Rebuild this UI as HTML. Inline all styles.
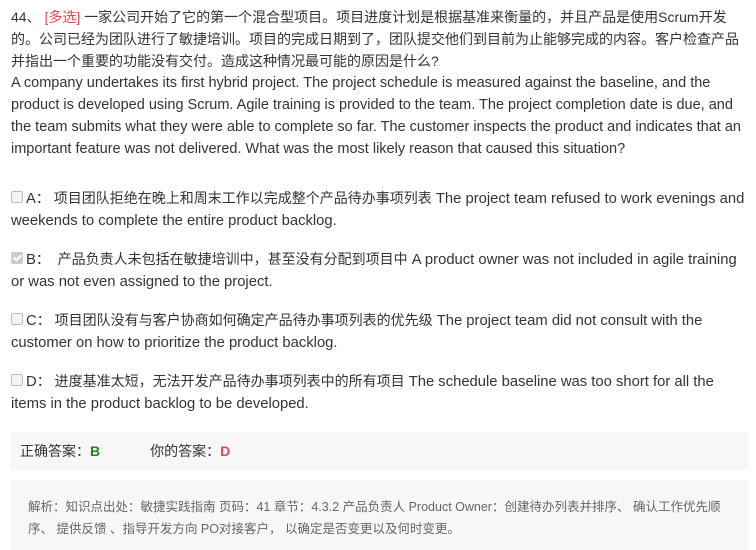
<!DOCTYPE html>
<html><head><meta charset="utf-8"><style>
body{margin:0;background:#fff;font-family:"Liberation Sans","Noto Sans CJK SC",sans-serif;color:#333;font-size:14px;}
.wrap{position:absolute;left:11px;top:6px;width:737px;}
p{margin:0;line-height:22px;}
.en{font-size:14.5px;}
.red{color:#e9474f;}
.opt{position:absolute;left:11px;width:737px;line-height:22px;font-size:14.8px}
.opt .zh{font-size:14px}
.cb{display:inline-block;width:10px;height:10px;border:1px solid #bbb;border-radius:2px;background:#f4f4f4;vertical-align:0px;margin-right:3px;position:relative}
.cb.on{background:#ccc;border-color:#ccc}
.cb.on:after{content:"";position:absolute;left:3px;top:0px;width:3px;height:6px;border:solid #fff;border-width:0 2px 2px 0;transform:rotate(45deg)}
.ans{position:absolute;left:11px;top:432px;width:737px;height:38px;background:#f7f7f7;line-height:38px;font-size:14px;color:#333}
.exp{position:absolute;left:11px;top:480px;width:737px;height:70px;background:#f7f7f7;font-size:12.5px;color:#666;}
</style></head><body>
<div class="wrap"><p>44、 <span class="red">[多选]</span> 一家公司开始了它的第一个混合型项目。项目进度计划是根据基准来衡量的，并且产品是使用Scrum开发的。公司已经为团队进行了敏捷培训。项目的完成日期到了，团队提交他们到目前为止能够完成的内容。客户检查产品并指出一个重要的功能没有交付。造成这种情况最可能的原因是什么?</p>
<p class="en">A company undertakes its first hybrid project. The project schedule is measured against the baseline, and the product is developed using Scrum. Agile training is provided to the team. The project completion date is due, and the team submits what they were able to complete so far. The customer inspects the product and indicates that an important feature was not delivered. What was the most likely reason that caused this situation?</p></div>
<div class="opt" style="top:187px"><span class="cb"></span>A<span class="zh">： 项目团队拒绝在晚上和周末工作以完成整个产品待办事项列表</span> The project team refused to work evenings and weekends to complete the entire product backlog.</div>
<div class="opt" style="top:248px"><span class="cb on"></span>B<span class="zh">： &nbsp;产品负责人未包括在敏捷培训中，甚至没有分配到项目中</span> A product owner was not included in agile training or was not even assigned to the project.</div>
<div class="opt" style="top:309px"><span class="cb"></span>C<span class="zh">： 项目团队没有与客户协商如何确定产品待办事项列表的优先级</span> The project team did not consult with the customer on how to prioritize the product backlog.</div>
<div class="opt" style="top:370px"><span class="cb"></span>D<span class="zh">： 进度基准太短，无法开发产品待办事项列表中的所有项目</span> The schedule baseline was too short for all the items in the product backlog to be developed.</div>
<div class="ans"><span style="margin-left:9px">正确答案：<b style="color:#1a8a1a">B</b></span><span style="margin-left:50px">你的答案：<b style="color:#e9474f">D</b></span></div>
<div class="exp"><div style="padding:16px 16px 0 17px;line-height:22px">解析：知识点出处：敏捷实践指南 页码：41 章节：4.3.2 产品负责人 Product Owner：创建待办列表并排序、 确认工作优先顺序、 提供反馈 、指导开发方向 PO对接客户， 以确定是否变更以及何时变更。</div></div>
</body></html>
